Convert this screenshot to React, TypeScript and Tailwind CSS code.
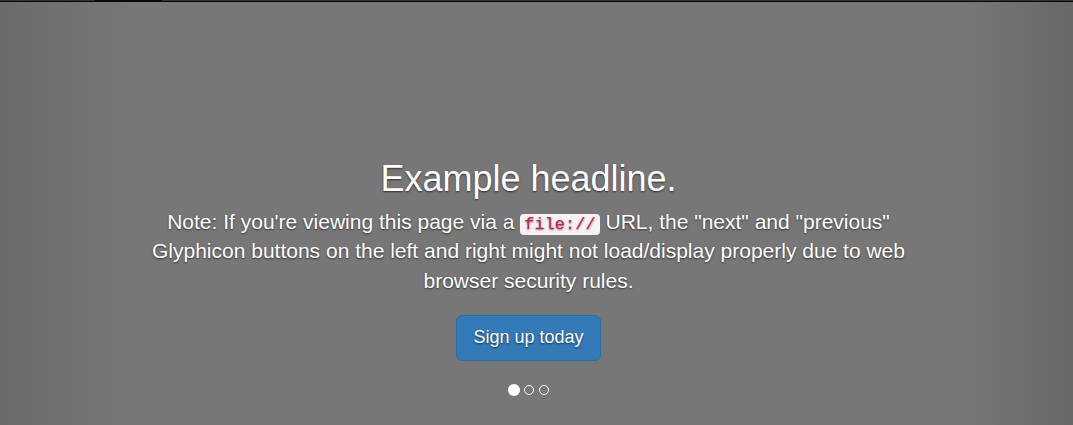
import React from "react";

export default function App() {
  return (
    <div className="relative w-full h-[425px] overflow-hidden bg-[#777777] font-['Liberation_Sans',Arial,sans-serif] text-white">
      <div className="flex h-[2px] w-full">
        <div className="flex w-[95px] flex-col">
          <div className="h-[1px] bg-[#333333]" />
          <div className="h-[1px] bg-[#080808]" />
        </div>
        <div className="w-[67px] bg-[#080808]" />
        <div className="flex flex-1 flex-col">
          <div className="h-[1px] bg-[#333333]" />
          <div className="h-[1px] bg-[#080808]" />
        </div>
      </div>

      <div className="pointer-events-none absolute left-0 top-[2px] bottom-0 w-[130px] bg-[linear-gradient(to_right,rgba(0,0,0,0.1),rgba(0,0,0,0))]" />
      <div className="pointer-events-none absolute right-0 top-[2px] bottom-0 w-[110px] bg-[linear-gradient(to_left,rgba(0,0,0,0.13),rgba(0,0,0,0))]" />

      <div className="relative flex flex-col items-center pr-[16px] pt-[157px] text-center [text-shadow:0_1px_2px_rgba(0,0,0,0.6)]">
        <h1 className="mb-[8px] text-[36px] font-normal leading-[1.1]">Example headline.</h1>
        <p className="mb-[20px] w-[790px] text-[21px] leading-[1.4]">
          Note: If you're viewing this page via a{" "}
          <code className="rounded-[4px] bg-[#f9f2f4] px-[4px] py-[1px] font-['Liberation_Mono',monospace] text-[17px] text-[#c7254e]">
            file://
          </code>{" "}
          URL, the "next" and "previous" Glyphicon buttons on the left and right might not load/display properly due to web browser security rules.
        </p>
        <a className="rounded-[6px] border border-[#2e6da4] bg-[#337ab7] px-[16px] py-[10px] text-[18px] leading-[1.3333] text-white">
          Sign up today
        </a>
        <div className="mt-[23px] flex items-center gap-[3px] [text-shadow:none]">
          <span className="h-[12px] w-[12px] rounded-full bg-white" />
          <span className="m-[1px] h-[10px] w-[10px] rounded-full border border-white" />
          <span className="m-[1px] h-[10px] w-[10px] rounded-full border border-white" />
        </div>
      </div>
    </div>
  );
}
